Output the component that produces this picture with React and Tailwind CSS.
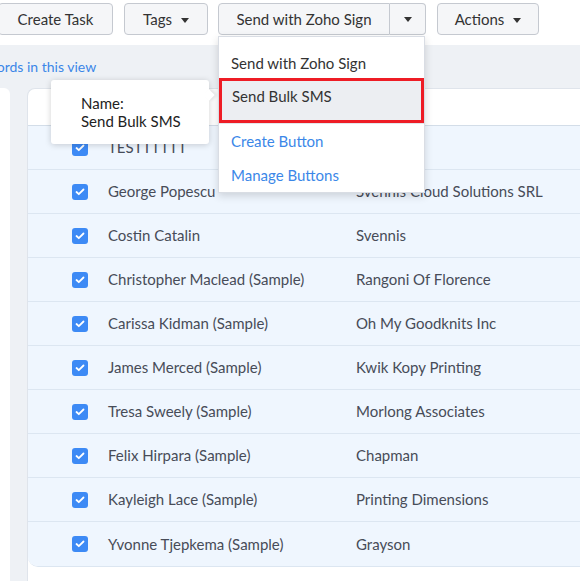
import React from "react";

const rows = [
	["TESTTTTTT", ""],
	["George Popescu", "Svennis Cloud Solutions SRL"],
	["Costin Catalin", "Svennis"],
	["Christopher Maclead (Sample)", "Rangoni Of Florence"],
	["Carissa Kidman (Sample)", "Oh My Goodknits Inc"],
	["James Merced (Sample)", "Kwik Kopy Printing"],
	["Tresa Sweely (Sample)", "Morlong Associates"],
	["Felix Hirpara (Sample)", "Chapman"],
	["Kayleigh Lace (Sample)", "Printing Dimensions"],
	["Yvonne Tjepkema (Sample)", "Grayson"],
];

const Caret = () => (
	<svg width="8" height="5" viewBox="0 0 8 5" className="ml-[9px] mt-[2px]">
		<path d="M0 0h8L4 5z" fill="#333" />
	</svg>
);

const Checkbox = () => (
	<div className="w-[16px] h-[16px] rounded-[3px] bg-[#3d8af5] flex items-center justify-center shrink-0">
		<svg width="10" height="8" viewBox="0 0 10 8">
			<path d="M1.5 4l2.3 2.2L8.5 1.5" stroke="#fff" strokeWidth="1.8" fill="none" strokeLinecap="round" strokeLinejoin="round" />
		</svg>
	</div>
);

const btn = "h-[32px] flex items-center justify-center rounded-[4px] border border-[#c5c9d0] bg-[#f5f6f8] text-[15px] text-[#333]";

export default function App() {
	return (
		<div className="relative w-[580px] h-[581px] overflow-hidden bg-white font-['Lato','Liberation_Sans',sans-serif] flex flex-col">
			{/* Toolbar */}
			<div className="h-[45px] shrink-0 flex items-start pt-[3px] gap-[11px] ml-[-2px]">
				<div className={`${btn} w-[115px]`}>Create Task</div>
				<div className={`${btn} w-[84px]`}>
					Tags
					<Caret />
				</div>
				<div className="flex ml-[-1px]">
					<div className={`${btn} w-[172px] rounded-r-none`}>Send with Zoho Sign</div>
					<div className={`${btn} w-[36px] rounded-l-none border-l-0`}>
						<svg width="8" height="5" viewBox="0 0 8 5">
							<path d="M0 0h8L4 5z" fill="#333" />
						</svg>
					</div>
				</div>
				<div className={`${btn} w-[102px]`}>
					Actions
					<Caret />
				</div>
			</div>

			{/* Content area */}
			<div className="flex-1 bg-[#eef1f5] flex flex-col">
				<div className="h-[43px] shrink-0 flex items-center">
					<span className="text-[14px] text-[#3b87e8] ml-[-22px]">records in this view</span>
				</div>
				<div className="flex-1 flex gap-[17px]">
					<div className="w-[10px] bg-white rounded-tr-[6px]" />
					<div className="flex-1 bg-white rounded-tl-[8px] border-l border-t border-[#dfe4eb] flex flex-col">
						<div className="h-[37px] shrink-0 border-b border-[#d3dde8] rounded-tl-[8px]" />
						<div className="flex flex-col rounded-bl-[10px] overflow-hidden border-b border-[#dce6f1]">
							{rows.map(([name, company], i) => (
								<div
									key={i}
									className={`h-[44px] flex items-center pl-[44px] bg-[#eff6fe] text-[15px] text-[#474c58] ${i < rows.length - 1 ? "border-b border-[#dce6f1]" : ""}`}
								>
									<Checkbox />
									<div className="w-[248px] ml-[20px]">{name}</div>
									<div>{company}</div>
								</div>
							))}
						</div>
					</div>
				</div>
			</div>

			{/* Dropdown menu */}
			<div className="absolute left-[218px] top-[36px] w-[207px] bg-white border border-[#d9dde4] shadow-[0_3px_8px_rgba(0,0,0,0.15)] pt-[9px] text-[15px]">
				<div className="h-[32px] flex items-center pl-[12px] pt-[2px] text-[#333]">Send with Zoho Sign</div>
				<div className="h-[45px] flex items-center pl-[10px] pb-[8px] text-[#333] bg-[#eceef2] border-[3px] border-[#ee1c25]">
					Send Bulk SMS
				</div>
				<div className="h-px bg-[#e3e6ea]" />
				<div className="h-[34px] flex items-center pl-[12px] text-[#3b87e8]">Create Button</div>
				<div className="h-[34px] flex items-center pl-[12px] text-[#3b87e8]">Manage Buttons</div>
			</div>

			{/* Tooltip */}
			<div className="absolute left-[51px] top-[80px] w-[158px] h-[64px] bg-white rounded-[3px] shadow-[0_1px_6px_rgba(0,0,0,0.18)] pl-[30px] pt-[14px] text-[15px] leading-[18px] text-[#222]">
				<div>Name:</div>
				<div>Send Bulk SMS</div>
				<div className="absolute right-[-4px] top-[11px] w-[8px] h-[8px] bg-white rotate-45 shadow-[2px_-2px_3px_rgba(0,0,0,0.08)]" />
			</div>
		</div>
	);
}
